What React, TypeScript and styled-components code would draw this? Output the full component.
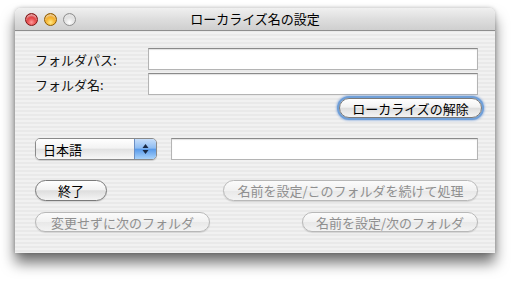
import React from "react";
import styled, { createGlobalStyle, css } from "styled-components";

const Global = createGlobalStyle`
  html, body { margin: 0; padding: 0; background: #ffffff; }
  body { font-family: "Noto Sans CJK JP", "Liberation Sans", sans-serif; }
`;

const Desk = styled.div`
  width: 525px;
  height: 282px;
  padding: 8px 0 0 15px;
  box-sizing: border-box;
`;

const Window = styled.div`
  width: 480px;
  height: 245px;
  border-radius: 6px 6px 0 0;
  box-shadow: 0 10px 14px rgba(0, 0, 0, 0.55), 0 0 4px rgba(0, 0, 0, 0.25);
  display: flex;
  flex-direction: column;
  overflow: hidden;
  background: repeating-linear-gradient(to bottom, #f1f1f1 0px, #f1f1f1 2px, #e9e9e9 2px, #e9e9e9 4px);
`;

const TitleBar = styled.div`
  height: 22px;
  flex: none;
  display: flex;
  align-items: center;
  position: relative;
  background: linear-gradient(to bottom, #f0f0f0 0%, #dedede 50%, #cfcfcf 100%);
  border-bottom: 1px solid #8d8d8d;
  padding-left: 10px;
  gap: 6px;
`;

const Light = styled.span<{ $c: "red" | "yellow" | "gray" }>`
  width: 13px;
  height: 13px;
  border-radius: 50%;
  box-sizing: border-box;
  ${(p) =>
    p.$c === "red"
      ? css`
          background: radial-gradient(circle at 50% 75%, #ff9a9a 0%, #e0393a 50%, #a81010 100%);
          border: 1px solid #7d1515;
        `
      : p.$c === "yellow"
      ? css`
          background: radial-gradient(circle at 50% 75%, #ffe98a 0%, #f2a515 55%, #b26a00 100%);
          border: 1px solid #8e5c00;
        `
      : css`
          background: radial-gradient(circle at 50% 75%, #ffffff 0%, #dcdcdc 55%, #a8a8a8 100%);
          border: 1px solid #8f8f8f;
        `}
  box-shadow: inset 0 2px 2px rgba(255, 255, 255, 0.6);
`;

const Title = styled.div`
  position: absolute;
  left: 0;
  right: 0;
  top: 0;
  height: 22px;
  line-height: 22px;
  text-align: center;
  font-size: 13px;
  color: #000;
  pointer-events: none;
`;

const Content = styled.div`
  flex: 1;
  display: flex;
  flex-direction: column;
  padding: 17px 13px 0 20px;
`;

const FieldRow = styled.div`
  display: flex;
  align-items: center;
  height: 22px;
  margin-right: 4px;
  & + & { margin-top: 3px; }
`;

const Label = styled.div`
  width: 113px;
  font-size: 13px;
  color: #111;
`;

const TextField = styled.div<{ $w?: number }>`
  flex: 1;
  height: 22px;
  box-sizing: border-box;
  background: #ffffff;
  border: 1px solid #b4b4b4;
  border-top-color: #8a8a8a;
  box-shadow: inset 0 1px 1px rgba(0, 0, 0, 0.12);
`;

const ButtonRow = styled.div<{ $top: number; $justify?: string }>`
  display: flex;
  justify-content: ${(p) => p.$justify || "space-between"};
  align-items: center;
  margin-top: ${(p) => p.$top}px;
`;

const Button = styled.div<{ $w: number; $disabled?: boolean; $focus?: boolean; $h?: number }>`
  width: ${(p) => p.$w}px;
  height: ${(p) => p.$h || 21}px;
  box-sizing: border-box;
  border-radius: 11px;
  display: flex;
  align-items: center;
  justify-content: center;
  font-size: 13px;
  white-space: nowrap;
  color: ${(p) => (p.$disabled ? "#8f8f8f" : "#000")};
  border: 1px solid ${(p) => (p.$disabled ? "#b8b8b8" : "#7a7a7a")};
  background: ${(p) =>
    p.$disabled
      ? "linear-gradient(to bottom, #fbfbfb 0%, #f1f1f1 50%, #e8e8e8 51%, #f3f3f3 100%)"
      : "linear-gradient(to bottom, #ffffff 0%, #f2f2f2 45%, #dedede 52%, #f4f4f4 100%)"};
  box-shadow: ${(p) =>
    p.$focus
      ? "0 0 0 2px #6f9fd8, 0 0 2px 3px rgba(90,140,210,0.45)"
      : "0 1px 1px rgba(0,0,0,0.12)"};
`;

const Popup = styled.div`
  width: 122px;
  height: 22px;
  box-sizing: border-box;
  border: 1px solid #8a8a8a;
  border-radius: 5px;
  display: flex;
  overflow: hidden;
  box-shadow: 0 1px 1px rgba(0, 0, 0, 0.15);
`;

const PopupText = styled.div`
  flex: 1;
  display: flex;
  align-items: center;
  padding-left: 7px;
  font-size: 13px;
  background: linear-gradient(to bottom, #ffffff 0%, #f3f3f3 45%, #e2e2e2 52%, #f7f7f7 100%);
`;

const PopupArrows = styled.div`
  width: 21px;
  display: flex;
  align-items: center;
  justify-content: center;
  border-left: 1px solid #6b8fc4;
  background: linear-gradient(to bottom, #c7defa 0%, #8fbdf2 45%, #5a9bea 52%, #a9d3fb 100%);
`;

const LangRow = styled.div`
  display: flex;
  align-items: center;
  gap: 14px;
  margin-top: 20px;
  margin-right: 4px;
`;

export default function App() {
  return (
    <>
      <Global />
      <Desk>
        <Window>
          <TitleBar>
            <Light $c="red" />
            <Light $c="yellow" />
            <Light $c="gray" />
            <Title>ローカライズ名の設定</Title>
          </TitleBar>
          <Content>
            <FieldRow>
              <Label>フォルダパス:</Label>
              <TextField />
            </FieldRow>
            <FieldRow>
              <Label>フォルダ名:</Label>
              <TextField />
            </FieldRow>
            <ButtonRow $top={3} $justify="flex-end">
              <Button $w={143} $focus $h={20}>ローカライズの解除</Button>
            </ButtonRow>
            <LangRow>
              <Popup>
                <PopupText>日本語</PopupText>
                <PopupArrows>
                  <svg width="7" height="12" viewBox="0 0 7 12">
                    <path d="M3.5 1 L6.5 5 L0.5 5 Z" fill="#1a2a44" />
                    <path d="M3.5 11 L6.5 7 L0.5 7 Z" fill="#1a2a44" />
                  </svg>
                </PopupArrows>
              </Popup>
              <TextField />
            </LangRow>
            <ButtonRow $top={20} style={{ marginRight: 4 }}>
              <Button $w={72}>終了</Button>
              <Button $w={255} $disabled>名前を設定/このフォルダを続けて処理</Button>
            </ButtonRow>
            <ButtonRow $top={11} style={{ marginRight: 4 }}>
              <Button $w={175} $disabled $h={20}>変更せずに次のフォルダ</Button>
              <Button $w={176} $disabled $h={20}>名前を設定/次のフォルダ</Button>
            </ButtonRow>
          </Content>
        </Window>
      </Desk>
    </>
  );
}
